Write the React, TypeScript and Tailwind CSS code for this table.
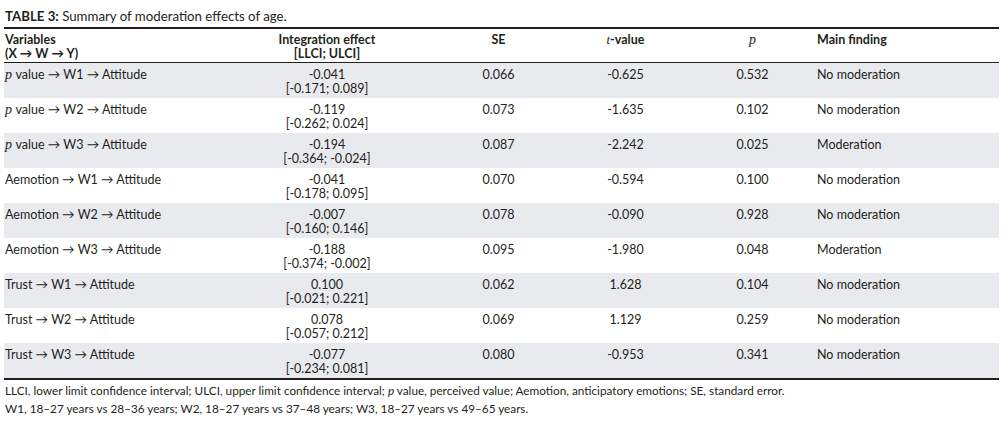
const rows = [
  { x: 'p', label: 'value', w: 'W1', est: '-0.041', ci: '[-0.171; 0.089]', se: '0.066', t: '-0.625', p: '0.532', finding: 'No moderation' },
  { x: 'p', label: 'value', w: 'W2', est: '-0.119', ci: '[-0.262; 0.024]', se: '0.073', t: '-1.635', p: '0.102', finding: 'No moderation' },
  { x: 'p', label: 'value', w: 'W3', est: '-0.194', ci: '[-0.364; -0.024]', se: '0.087', t: '-2.242', p: '0.025', finding: 'Moderation' },
  { x: '', label: 'Aemotion', w: 'W1', est: '-0.041', ci: '[-0.178; 0.095]', se: '0.070', t: '-0.594', p: '0.100', finding: 'No moderation' },
  { x: '', label: 'Aemotion', w: 'W2', est: '-0.007', ci: '[-0.160; 0.146]', se: '0.078', t: '-0.090', p: '0.928', finding: 'No moderation' },
  { x: '', label: 'Aemotion', w: 'W3', est: '-0.188', ci: '[-0.374; -0.002]', se: '0.095', t: '-1.980', p: '0.048', finding: 'Moderation' },
  { x: '', label: 'Trust', w: 'W1', est: '0.100', ci: '[-0.021; 0.221]', se: '0.062', t: '1.628', p: '0.104', finding: 'No moderation' },
  { x: '', label: 'Trust', w: 'W2', est: '0.078', ci: '[-0.057; 0.212]', se: '0.069', t: '1.129', p: '0.259', finding: 'No moderation' },
  { x: '', label: 'Trust', w: 'W3', est: '-0.077', ci: '[-0.234; 0.081]', se: '0.080', t: '-0.953', p: '0.341', finding: 'No moderation' },
];

const cols = 'grid grid-cols-[215px_216px_127px_127px_127px_1fr]';
const serifItalic = "font-['Liberation_Serif',serif] italic";

export default function App() {
  return (
    <div className="min-h-screen bg-white font-['Lato',sans-serif] text-[#231f20]">
      <div className="ml-[4px] w-[995px] pt-[8px]">
        <p className="pl-[1px] text-[13.25px] leading-[16px]">
          <span className="font-bold">TABLE 3:</span> Summary of moderation effects of age.
        </p>

        <div className="mt-[3px] border-t-2 border-b-2 border-[#231f20] text-[12.5px] leading-[14px]">
          <div className={`${cols} border-b border-[#231f20] pt-[4px] pb-[1px] font-bold`}>
            <div className="pl-[1px]">
              <div>Variables</div>
              <div>(X → W → Y)</div>
            </div>
            <div className="text-center">
              <div>Integration effect</div>
              <div>[LLCI; ULCI]</div>
            </div>
            <div className="text-center">SE</div>
            <div className="text-center">
              <span className={`${serifItalic} font-normal`}>t</span>-value
            </div>
            <div className="text-center">
              <span className={`${serifItalic} font-normal text-[14px]`}>p</span>
            </div>
            <div className="pl-[1px]">Main finding</div>
          </div>

          {rows.map((r, i) => (
            <div
              key={i}
              className={`${cols} h-[35px] pt-[5px] ${i % 2 === 0 ? 'bg-[#e9eaee]' : 'bg-white'}`}
            >
              <div className="pl-[1px]">
                {r.x ? <span className={`${serifItalic} text-[14px]`}>{r.x} </span> : null}
                {r.label} → {r.w} → Attitude
              </div>
              <div className="text-center">
                <div>{r.est}</div>
                <div>{r.ci}</div>
              </div>
              <div className="text-center">{r.se}</div>
              <div className="text-center">{r.t}</div>
              <div className="text-center">{r.p}</div>
              <div className="pl-[1px]">{r.finding}</div>
            </div>
          ))}
        </div>

        <div className="mt-[2px] pl-[1px] text-[11.75px] leading-[18px]">
          <p>
            LLCI, lower limit confidence interval; ULCI, upper limit confidence interval; <span className="italic">p</span> value, perceived value; Aemotion, anticipatory emotions; SE, standard error.
          </p>
          <p>W1, 18–27 years vs 28–36 years; W2, 18–27 years vs 37–48 years; W3, 18–27 years vs 49–65 years.</p>
        </div>
      </div>
    </div>
  );
}
